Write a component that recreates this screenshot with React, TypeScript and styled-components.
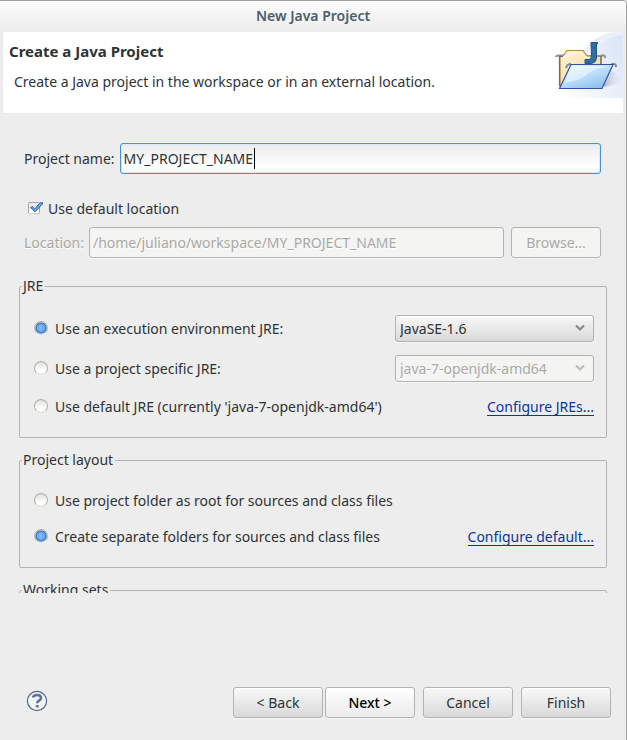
import React from "react";
import styled, { createGlobalStyle, css } from "styled-components";

const GlobalStyle = createGlobalStyle`
  *, *::before, *::after { box-sizing: border-box; }
  body { margin: 0; background: #ededed; }
  body, button, input, select {
    font-family: "Noto Sans", "Open Sans", sans-serif;
    font-size: 14px;
    line-height: 20px;
    color: #2e3436;
  }
`;

const Dialog = styled.form`
  display: flex;
  flex-direction: column;
  min-height: 100vh;
  background: #ededed;
  border-top: 1px solid #a1a1a1;
  border-right: 1px solid #a1a1a1;
  border-top-right-radius: 4px;
`;

const TitleBar = styled.header`
  height: 31px;
  padding-bottom: 2px;
  display: flex;
  align-items: center;
  justify-content: center;
  background: linear-gradient(#fdfdfd, #ececec);
  border-top-right-radius: 3px;
  color: #4a5f6b;
  font-weight: 600;
`;

const Banner = styled.section`
  display: flex;
  justify-content: space-between;
  margin: 0 3px;
  height: 81px;
  background: #ffffff;
`;

const BannerText = styled.div`
  padding: 9px 6px;
`;

const Heading = styled.h1`
  margin: 0;
  font-size: 15px;
  line-height: 20px;
  font-weight: 700;
`;

const Description = styled.p`
  margin: 11px 0 0 5px;
`;

const Content = styled.main`
  padding: 30px 19px 0;
`;

const FieldRow = styled.div`
  display: flex;
  align-items: center;
  padding: 0 6px 0 5px;
`;

const disabledText = css`
  color: #a8a8a6;
  text-shadow: 0 1px #ffffff;
`;

const FieldLabel = styled.label<{ $disabled?: boolean }>`
  margin-right: 5px;
  ${(p) => p.$disabled && disabledText}
`;

const InputBox = styled.div`
  position: relative;
  display: flex;
  flex: 1;
  min-width: 0;
  & + button { margin-left: 7px; }
`;

const TextInput = styled.input`
  flex: 1;
  min-width: 0;
  height: 31px;
  padding: 0 3px;
  border: 1px solid #4a90d9;
  border-radius: 3px;
  outline: none;
  background: linear-gradient(#dfe9f2 0 1px, #ededed 2px, #ffffff 80%);
  box-shadow: inset 0 0 0 1px #dbe8f5;
  &:disabled {
    ${disabledText}
    border-color: #b3b4b1;
    background: #f4f4f2;
    box-shadow: 0 1px #f8f8f8;
    opacity: 1;
  }
`;

const Caret = styled.span`
  position: absolute;
  left: 134px;
  top: 5px;
  width: 1px;
  height: 21px;
  background: #000000;
`;

const Button = styled.button<{ $primary?: boolean }>`
  width: 90px;
  height: 31px;
  padding: 0;
  border: 1px solid #b2b2b0;
  border-radius: 3px;
  background: ${(p) => (p.$primary ? "linear-gradient(#ffffff, #ebebeb)" : "linear-gradient(#f8f8f8, #d9d9d9)")};
  color: ${(p) => (p.$primary ? "#000000" : "#2e3436")};
  font-weight: ${(p) => (p.$primary ? 500 : 400)};
  box-shadow: inset 0 1px #ffffff, 0 1px #f8f8f8;
  &:disabled {
    ${disabledText}
    background: #f4f4f2;
    box-shadow: 0 1px #f8f8f8;
  }
`;

const CheckRow = styled.label`
  display: flex;
  align-items: center;
  gap: 4px;
  margin: 25px 0 8px 9px;
`;

const CheckWrap = styled.span`
  position: relative;
  display: flex;
  width: 16px;
  height: 16px;
`;

const CheckInput = styled.input`
  appearance: none;
  width: 12px;
  height: 12px;
  margin: 1px 0 0;
  border: 1px solid #a3a89c;
  border-bottom-color: #cccccc;
  border-radius: 2px;
  background: linear-gradient(#e8e8e8, #ffffff);
  & + svg { display: none; }
  &:checked + svg { display: block; }
`;

const Tick = styled.svg`
  position: absolute;
  left: 1px;
  top: 0;
  pointer-events: none;
`;

const Group = styled.fieldset`
  min-width: 0;
  margin: 0;
  padding: 19px 12px 18px 14px;
  border: 1px solid #b3b4b1;
  border-radius: 2px;
`;

const Groups = styled.div`
  display: grid;
  gap: 12px;
  margin-top: 18px;
`;

const Legend = styled.legend`
  margin-left: -12px;
  padding: 0 2px 0 1px;
`;

const Rows = styled.div<{ $gap: number }>`
  display: grid;
  gap: ${(p) => p.$gap}px;
`;

const Row = styled.div`
  display: flex;
  align-items: center;
  justify-content: space-between;
  min-height: 24px;
`;

const RadioLabel = styled.label`
  display: flex;
  align-items: center;
  gap: 7px;
`;

const Radio = styled.input`
  appearance: none;
  width: 14px;
  height: 14px;
  margin: 0 0 2px;
  border: 1px solid #acb0a6;
  border-bottom-color: #d4d4d2;
  border-radius: 50%;
  background: linear-gradient(#dfdfdd, #ffffff 70%);
  box-shadow: 0 1px #f8f8f8;
  &:checked {
    background: radial-gradient(circle at 50% 50%, #8fc0f7 0, #62a4f2 4px, #2c66ad 5px, #eeeeec 6px);
  }
`;

const SelectBox = styled.div`
  position: relative;
  display: flex;
  width: 199px;
`;

const Select = styled.select`
  appearance: none;
  flex: 1;
  height: 27px;
  padding: 0 30px 0 4px;
  border: 1px solid #b2b2b0;
  border-radius: 3px;
  background: linear-gradient(#f8f8f8, #d9d9d9);
  box-shadow: inset 0 1px #ffffff, 0 1px #f8f8f8;
  & + svg { color: #888a85; }
  &:disabled {
    ${disabledText}
    background: #f4f4f2;
    box-shadow: 0 1px #f8f8f8;
    opacity: 1;
  }
  &:disabled + svg { color: #bcbdba; }
`;

const Chevron = styled.svg`
  position: absolute;
  right: 9px;
  top: 9px;
  pointer-events: none;
`;

const Link = styled.a`
  color: #0a369d;
  line-height: 16px;
  text-decoration: none;
  border-bottom: 1px solid #0a369d;
`;

const Clip = styled.div`
  height: 13px;
  overflow: hidden;
`;

const Footer = styled.footer`
  display: flex;
  align-items: center;
  justify-content: space-between;
  margin-top: auto;
  padding: 0 15px 22px 26px;
`;

const HelpButton = styled.button`
  display: flex;
  padding: 0 0 3px;
  border: 0;
  background: none;
`;

const Actions = styled.div`
  display: flex;
  gap: 8px;
`;

const StepButtons = styled.div`
  display: flex;
  gap: 2px;
`;

function FolderArt() {
  return (
    <svg width="72" height="66" viewBox="0 0 72 66" aria-hidden="true">
      <defs>
        <linearGradient id="haze" x1="0" x2="1" y1="0.7" y2="0.2">
          <stop offset="0" stopColor="#ffffff" />
          <stop offset="1" stopColor="#dce6f6" />
        </linearGradient>
        <linearGradient id="paper" x1="0" x2="1" y1="0" y2="1">
          <stop offset="0" stopColor="#fff6d8" />
          <stop offset="1" stopColor="#efd08c" />
        </linearGradient>
        <linearGradient id="front" x1="0" x2="0.7" y1="0" y2="1">
          <stop offset="0" stopColor="#eaf7ff" />
          <stop offset="0.5" stopColor="#bfe2fb" />
          <stop offset="1" stopColor="#8dc0f0" />
        </linearGradient>
        <linearGradient id="shade" x1="0" x2="1">
          <stop offset="0" stopColor="#a9b4cf" />
          <stop offset="1" stopColor="#e3eaf6" stopOpacity="0" />
        </linearGradient>
      </defs>
      <path d="M0 66C12 58 22 34 34 17C42 6 54 0 72 0V66Z" fill="url(#haze)" />
      <path d="M38 30C48 8 58 5 72 3V0H67C52 2 40 12 34 24Z" fill="#ffffff" opacity="0.35" />
      <path d="M52 55L60 39L72 46Q65 54 52 55Z" fill="url(#shade)" />
      <path d="M5 25Q5 23.500 8 23.500H14M50 23.500H53Q54 23.500 54 26" fill="none" stroke="#8d8f9a" strokeWidth="2" />
      <path d="M9 54V24H12L16 18.500H32L36 24H50V54Z" fill="url(#paper)" stroke="#b98b35" strokeWidth="1.200" />
      <path d="M12 25H17L20 21H30L34 25H46" fill="none" stroke="#fff5d3" strokeWidth="2" />
      <path d="M8.500 54V24.500H12M36 24H50V33" fill="none" stroke="#6d6978" strokeWidth="1.200" />
      <path d="M40 10.500H46.500V12H45.500V25Q45.500 31.500 39 31.500H34V27.500H37Q40.500 27.500 40.500 23Z" fill="#2f6f9f" stroke="#1d5785" />
      <path d="M15 36Q16 32 20 32M60 32H63Q65 32 65 35" fill="none" stroke="#858b98" strokeWidth="2" />
      <path d="M20 32.500H62L51 56.500H8.500Z" fill="url(#front)" stroke="#3552a8" strokeWidth="1.200" />
      <path d="M20.500 34H58C48 35 38 40 33 45C26 49 18 50 13 51Z" fill="#ffffff" opacity="0.45" />
    </svg>
  );
}

function DownArrow() {
  return (
    <Chevron width="10" height="8" viewBox="0 0 10 8" aria-hidden="true">
      <path d="M1 1.500L5 5.500L9 1.500" fill="none" stroke="currentColor" strokeWidth="2.200" />
    </Chevron>
  );
}

function HelpIcon() {
  return (
    <svg width="22" height="22" viewBox="0 0 22 22" aria-hidden="true">
      <circle cx="11" cy="11" r="9.600" fill="#f3f4f6" stroke="#566a8c" strokeWidth="1.200" />
      <path d="M7 7.600Q7.500 5 11 5Q15 5 15 8Q15 9.500 13 10.700Q11.200 11.700 11.200 13.200" fill="none" stroke="#5d7193" strokeWidth="2.500" />
      <rect x="9.800" y="15" width="2.800" height="2.600" rx="0.600" fill="#5d7193" />
    </svg>
  );
}

export default function App() {
  return (
    <>
      <GlobalStyle />
      <Dialog onSubmit={(e) => e.preventDefault()}>
        <TitleBar>New Java Project</TitleBar>
        <Banner>
          <BannerText>
            <Heading>Create a Java Project</Heading>
            <Description>Create a Java project in the workspace or in an external location.</Description>
          </BannerText>
          <FolderArt />
        </Banner>
        <Content>
          <FieldRow>
            <FieldLabel htmlFor="name">Project name:</FieldLabel>
            <InputBox>
              <TextInput id="name" defaultValue="MY_PROJECT_NAME" />
              <Caret />
            </InputBox>
          </FieldRow>
          <CheckRow>
            <CheckWrap>
              <CheckInput type="checkbox" defaultChecked />
              <Tick width="15" height="13" viewBox="0 0 15 13" aria-hidden="true">
                <path d="M1.500 6.500L3.500 5.500L5.500 8L11 2L13.500 1.500L13.500 3L6 11Z" fill="#6aa5ea" stroke="#2a5f9f" strokeWidth="0.900" strokeLinejoin="round" />
              </Tick>
            </CheckWrap>
            Use default location
          </CheckRow>
          <FieldRow>
            <FieldLabel htmlFor="location" $disabled>Location:</FieldLabel>
            <InputBox>
              <TextInput id="location" defaultValue="/home/juliano/workspace/MY_PROJECT_NAME" disabled />
            </InputBox>
            <Button type="button" disabled>Browse...</Button>
          </FieldRow>
          <Groups>
            <Group>
              <Legend>JRE</Legend>
              <Rows $gap={13}>
                <Row>
                  <RadioLabel>
                    <Radio type="radio" name="jre" defaultChecked />
                    Use an execution environment JRE:
                  </RadioLabel>
                  <SelectBox>
                    <Select aria-label="Execution environment">
                      <option>JavaSE-1.6</option>
                    </Select>
                    <DownArrow />
                  </SelectBox>
                </Row>
                <Row>
                  <RadioLabel>
                    <Radio type="radio" name="jre" />
                    Use a project specific JRE:
                  </RadioLabel>
                  <SelectBox>
                    <Select aria-label="Project specific JRE" disabled>
                      <option>java-7-openjdk-amd64</option>
                    </Select>
                    <DownArrow />
                  </SelectBox>
                </Row>
                <Row>
                  <RadioLabel>
                    <Radio type="radio" name="jre" />
                    Use default JRE (currently 'java-7-openjdk-amd64')
                  </RadioLabel>
                  <Link href="#jres">Configure JREs...</Link>
                </Row>
              </Rows>
            </Group>
            <Group>
              <Legend>Project layout</Legend>
              <Rows $gap={12}>
                <Row>
                  <RadioLabel>
                    <Radio type="radio" name="layout" />
                    Use project folder as root for sources and class files
                  </RadioLabel>
                </Row>
                <Row>
                  <RadioLabel>
                    <Radio type="radio" name="layout" defaultChecked />
                    Create separate folders for sources and class files
                  </RadioLabel>
                  <Link href="#default">Configure default...</Link>
                </Row>
              </Rows>
            </Group>
            <Clip>
              <Group>
                <Legend>Working sets</Legend>
              </Group>
            </Clip>
          </Groups>
        </Content>
        <Footer>
          <HelpButton type="button" aria-label="Help">
            <HelpIcon />
          </HelpButton>
          <Actions>
            <StepButtons>
              <Button type="button">&lt; Back</Button>
              <Button type="button" $primary>Next &gt;</Button>
            </StepButtons>
            <Button type="button">Cancel</Button>
            <Button type="submit">Finish</Button>
          </Actions>
        </Footer>
      </Dialog>
    </>
  );
}
